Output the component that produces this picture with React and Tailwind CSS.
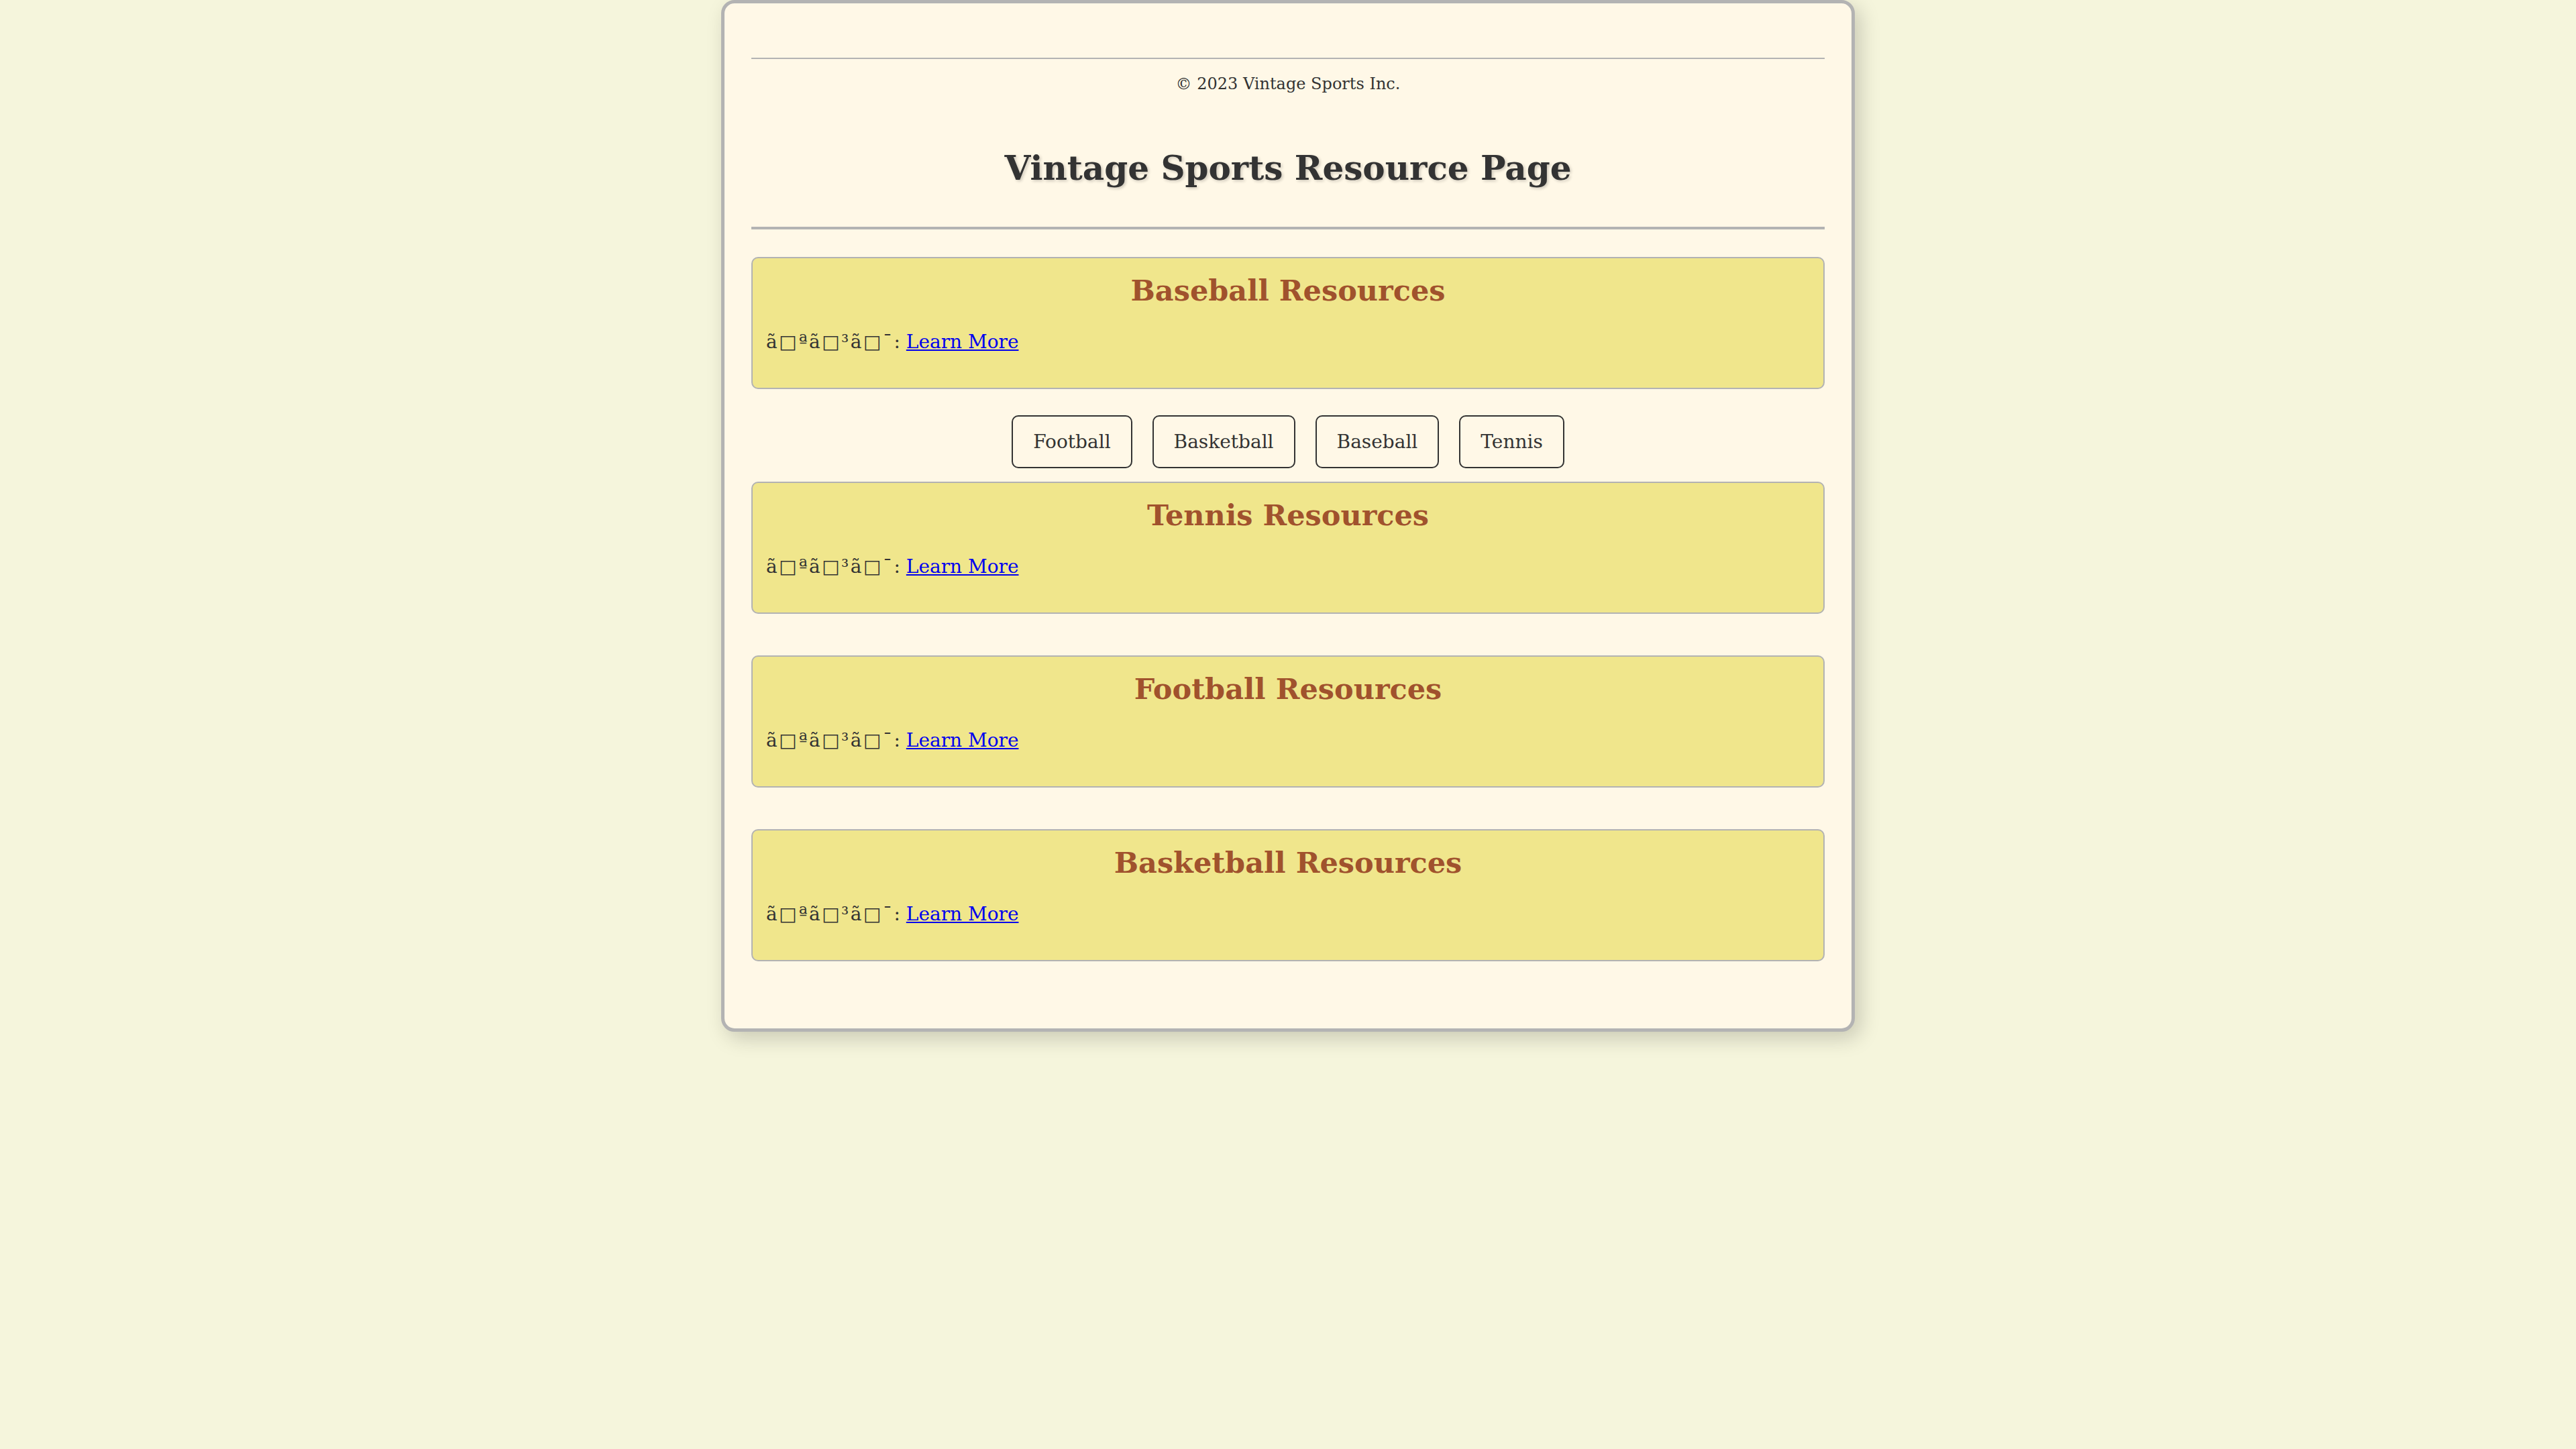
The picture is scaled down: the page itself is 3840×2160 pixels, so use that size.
import React from 'react';

const sports = ['Football', 'Basketball', 'Baseball', 'Tennis'];

const ResourceBox = ({ title, className = '' }) => (
    <section className={`rounded-[10px] border-2 border-[#b3b3b3] bg-[#f0e68c] px-[20px] pt-[22px] pb-[50px] ${className}`}>
        <h2 className="text-center text-[43px] leading-[52px] font-bold text-[#a0522d]">{title}</h2>
        <p className="mt-[33px] text-[28px] leading-[36px] text-[#333]">
            <span className="tracking-[2.5px]">ã□ªã□³ã□¯</span>:{' '}
            <a href="#" className="text-[#0000ee] underline">Learn More</a>
        </p>
    </section>
);

const App = () => {
    return (
        <div className="min-h-screen bg-[#f5f5dc] font-['DejaVu_Serif',serif] text-[#333]">
            <div className="mx-auto w-[1690px] rounded-[20px] border-[5px] border-[#b3b3b3] bg-[#fff8e7] px-[40px] pt-[40px] pb-[40px] shadow-[8px_10px_30px_rgba(0,0,0,0.18)]">
                <header>
                    <div className="mt-[41px] h-[2px] bg-[#b3b3b3]" />
                    <p className="mt-[23px] text-center text-[24px] leading-[28px]">© 2023 Vintage Sports Inc.</p>
                    <h1 className="mt-[82px] text-center text-[50px] leading-[60px] font-bold [text-shadow:2px_2px_4px_rgba(0,0,0,0.2)]">
                        Vintage Sports Resource Page
                    </h1>
                    <div className="mt-[57px] h-[4px] bg-[#b3b3b3]" />
                </header>

                <ResourceBox title="Baseball Resources" className="mt-[41px]" />

                {/* sport filter */}
                <nav className="mt-[39px] flex justify-center gap-[30px]">
                    {sports.map((s) => (
                        <button
                            key={s}
                            type="button"
                            className="rounded-[10px] border-2 border-[#333] bg-transparent px-[30px] py-[19px] text-[28px] leading-[37px] text-[#333]"
                        >
                            {s}
                        </button>
                    ))}
                </nav>

                <ResourceBox title="Tennis Resources" className="mt-[20px]" />
                <ResourceBox title="Football Resources" className="mt-[62px]" />
                <ResourceBox title="Basketball Resources" className="mt-[62px] mb-[60px]" />
            </div>
        </div>
    );
};

export default App;
